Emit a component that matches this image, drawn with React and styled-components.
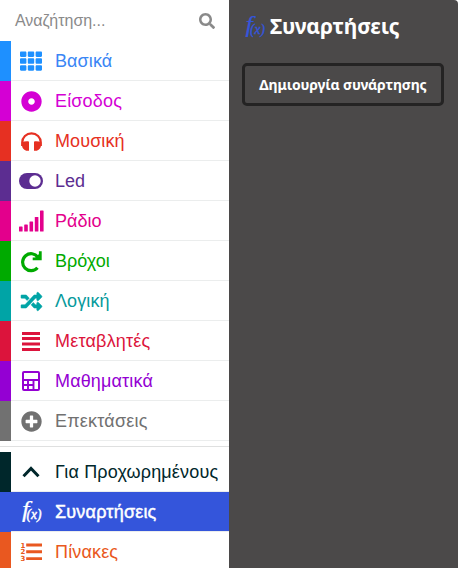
import React from "react";
import styled, { createGlobalStyle } from "styled-components";
import { FaTh, FaSearch, FaDotCircle, FaRandom, FaPlusCircle } from "react-icons/fa";

const GlobalStyle = createGlobalStyle`
  * { box-sizing: border-box; }
  body { margin: 0; background: #fff; overflow: hidden; }
`;

const Layout = styled.div`
  display: flex;
  width: 458px;
  height: 568px;
  overflow: hidden;
  font-family: "Liberation Sans", Arial, sans-serif;
`;

const Toolbox = styled.nav`
  display: flex;
  flex-direction: column;
  flex: 0 0 229px;
  overflow: hidden;
  background: #fff;
`;

const SearchBar = styled.div`
  display: flex;
  flex: none;
  align-items: center;
  justify-content: space-between;
  height: 41px;
  padding: 0 14px 0 15px;
  color: #8a8a8a;
  font-size: 16px;
  svg { width: 16px; height: 16px; }
`;

const Placeholder = styled.span`
  letter-spacing: -0.02px;
`;

const Category = styled.div`
  display: flex;
  flex: none;
  align-items: center;
  height: 40px;
  border-left: 11px solid ${(p) => p.$color};
  background: ${(p) => (p.$selected ? p.$color : "#fff")};
  color: ${(p) => (p.$selected ? "#fff" : p.$text || p.$color)};
  box-shadow: inset 0 -1px 0 #ebeded;
`;

const IconSlot = styled.span`
  display: flex;
  flex: 0 0 40px;
  justify-content: center;
  color: ${(p) => p.$color};
  svg { display: block; flex: none; width: ${(p) => p.$w}px; height: ${(p) => p.$h}px; overflow: visible; }
`;

const Label = styled.span`
  margin-left: 4px;
  font-size: 18px;
  line-height: 20px;
  white-space: nowrap;
  letter-spacing: ${(p) => p.$spacing || 0}px;
  -webkit-text-stroke: ${(p) => (p.$selected ? "0.45px" : "0")};
`;

const Divider = styled.div`
  flex: none;
  height: 11px;
  padding-top: 5px;
  &::after { content: ""; display: block; height: 1px; background: #dfe0e0; }
`;

const Flyout = styled.section`
  display: flex;
  flex: 1;
  flex-direction: column;
  align-items: flex-start;
  padding: 10px 14px 0 13px;
  border-top-right-radius: 4px;
  background: #4b4949;
  font-family: "Noto Sans", "Open Sans", sans-serif;
  color: #fff;
`;

const Heading = styled.h2`
  display: flex;
  align-items: center;
  height: 32px;
  margin: 0 0 21px;
  font-size: 21px;
  font-weight: 700;
  line-height: 32px;
  letter-spacing: -0.15px;
  white-space: nowrap;
  svg { width: 22px; height: 24px; margin: 2px 4px 0 2px; color: #3455db; overflow: visible; }
`;

const CreateButton = styled.button`
  width: 202px;
  height: 43px;
  padding: 0;
  border: 3px solid #242323;
  border-radius: 5px;
  background: #4b4949;
  color: #fff;
  font: 700 14px "Noto Sans", "Open Sans", sans-serif;
  letter-spacing: -0.15px;
  white-space: nowrap;
`;

const FunctionText = styled.text`
  font-family: "Liberation Serif", serif;
  font-style: italic;
  font-weight: 400;
  letter-spacing: 0;
  fill: currentColor;
  stroke: currentColor;
  stroke-width: ${(p) => p.$weight};
`;

const ListNumber = styled.text`
  font: 700 7px "DejaVu Sans", sans-serif;
  fill: currentColor;
`;

function FunctionIcon({ weight = 0.4, shift = 0 }) {
  return (
    <svg viewBox="0 0 22 24">
      <g transform={`translate(${shift} 0)`}>
        <FunctionText transform="translate(3.4 17) scale(1.15 1)" fontSize="23" $weight={0.2}>f</FunctionText>
        <FunctionText transform="translate(8 18.5) scale(0.93 1)" fontSize="14.5" $weight={weight}>(x)</FunctionText>
      </g>
    </svg>
  );
}

function CalculatorIcon() {
  return (
    <svg viewBox="0 0 18 20" fill="none" stroke="currentColor">
      <rect x="1" y="1" width="16" height="18" rx="1" strokeWidth="2" />
      <path d="M1 9H17M6 10V19M11.5 10V19M1 14H12" strokeWidth="1.9" />
    </svg>
  );
}

function HeadphonesIcon() {
  return (
    <svg viewBox="0 0 21 19">
      <path d="M1.2 14V10.5A9.3 9.2 0 0 1 19.8 10.5V14" fill="none" stroke="currentColor" strokeWidth="2.2" />
      <path d="M1 10.2Q3 9 7 9.2Q8 9.2 8 10.2V18.7H5.2Q1 17.2 1 13ZM20 10.2Q18 9 14 9.2Q13 9.2 13 10.2V18.7H15.8Q20 17.2 20 13Z" fill="currentColor" />
    </svg>
  );
}

function ToggleIcon() {
  return (
    <svg viewBox="0 0 24 16">
      <rect width="24" height="16" rx="8" fill="currentColor" />
      <circle cx="16" cy="8" r="5.7" fill="#fff" />
    </svg>
  );
}

function SignalIcon() {
  return (
    <svg viewBox="0 0 25 22" fill="currentColor">
      <rect y="16.5" width="3.6" height="5" rx=".6" />
      <rect x="5.2" y="14.5" width="3.6" height="7" rx=".6" />
      <rect x="10.5" y="11.5" width="3.6" height="10" rx=".6" />
      <rect x="15.8" y="7" width="3.6" height="14.5" rx=".6" />
      <rect x="21" y=".5" width="3.6" height="21" rx=".6" />
    </svg>
  );
}

function LoopIcon() {
  return (
    <svg viewBox="0 0 21 21" fill="none" stroke="currentColor">
      <path d="M17 6.2A8.5 8.5 0 1 0 16.5 16.8" strokeWidth="3.2" />
      <path d="M19.3 .3V7.9H11.7" strokeWidth="2.8" />
      <path d="M19 2L13.5 7.5H19Z" fill="currentColor" stroke="none" />
    </svg>
  );
}

function LinesIcon() {
  return (
    <svg viewBox="0 0 18 19" stroke="currentColor">
      <path d="M0 1.5H18M0 6.5H18M0 12H18M0 17.5H18" strokeWidth="2.8" />
    </svg>
  );
}

function ChevronIcon() {
  return (
    <svg viewBox="0 0 18 12" fill="none" stroke="currentColor">
      <path d="M1.5 10.2L9 2.5L16.5 10.2" strokeWidth="3" />
    </svg>
  );
}

function NumberedListIcon() {
  return (
    <svg viewBox="0 0 22 20">
      <ListNumber x="0.4" y="5.6">1</ListNumber>
      <ListNumber x="0.4" y="12.4">2</ListNumber>
      <ListNumber x="0.4" y="19.2">3</ListNumber>
      <path d="M6.2 3H22M6.2 9.8H22M6.2 16.6H22" stroke="currentColor" strokeWidth="2.9" />
    </svg>
  );
}

const mainCategories = [
  { name: "Βασικά", color: "#1e90ff", text: "#3a86f5", icon: <FaTh />, w: 22, h: 22, spacing: 0.1 },
  { name: "Είσοδος", color: "#d400d4", icon: <FaDotCircle />, w: 21, h: 21, spacing: 0.17 },
  { name: "Μουσική", color: "#e63022", icon: <HeadphonesIcon />, w: 21, h: 19, spacing: 0.1 },
  { name: "Led", color: "#5c2d91", icon: <ToggleIcon />, w: 24, h: 16 },
  { name: "Ράδιο", color: "#e3008c", icon: <SignalIcon />, w: 25, h: 22 },
  { name: "Βρόχοι", color: "#00aa00", icon: <LoopIcon />, w: 21, h: 21 },
  { name: "Λογική", color: "#00a4a6", text: "#079a9c", icon: <FaRandom stroke="currentColor" strokeWidth={12} />, w: 21, h: 21, spacing: 0.1 },
  { name: "Μεταβλητές", color: "#dc143c", icon: <LinesIcon />, w: 18, h: 19, spacing: 0.2 },
  { name: "Μαθηματικά", color: "#9400d3", icon: <CalculatorIcon />, w: 18, h: 20, spacing: 0.15 },
  { name: "Επεκτάσεις", color: "#717171", icon: <FaPlusCircle />, w: 21, h: 21, spacing: 0.2 },
];

const advancedCategories = [
  { name: "Για Προχωρημένους", color: "#00272b", icon: <ChevronIcon />, w: 18, h: 12, spacing: 0.16 },
  { name: "Συναρτήσεις", color: "#3455db", icon: <FunctionIcon weight={0.5} shift={-1.5} />, w: 22, h: 24, selected: true, spacing: 0.2 },
  { name: "Πίνακες", color: "#e95820", icon: <NumberedListIcon />, w: 22, h: 20, spacing: 0.15 },
];

function CategoryRow({ item }) {
  return (
    <Category $color={item.color} $text={item.text} $selected={item.selected}>
      <IconSlot $w={item.w} $h={item.h} $color={item.selected ? "#fff" : item.color}>{item.icon}</IconSlot>
      <Label $selected={item.selected} $spacing={item.spacing}>{item.name}</Label>
    </Category>
  );
}

export default function App() {
  return (
    <>
      <GlobalStyle />
      <Layout>
        <Toolbox>
          <SearchBar><Placeholder>Αναζήτηση...</Placeholder><FaSearch /></SearchBar>
          {mainCategories.map((item) => <CategoryRow key={item.name} item={item} />)}
          <Divider />
          {advancedCategories.map((item) => <CategoryRow key={item.name} item={item} />)}
        </Toolbox>
        <Flyout>
          <Heading><FunctionIcon shift={-2} />Συναρτήσεις</Heading>
          <CreateButton>Δημιουργία συνάρτησης</CreateButton>
        </Flyout>
      </Layout>
    </>
  );
}
